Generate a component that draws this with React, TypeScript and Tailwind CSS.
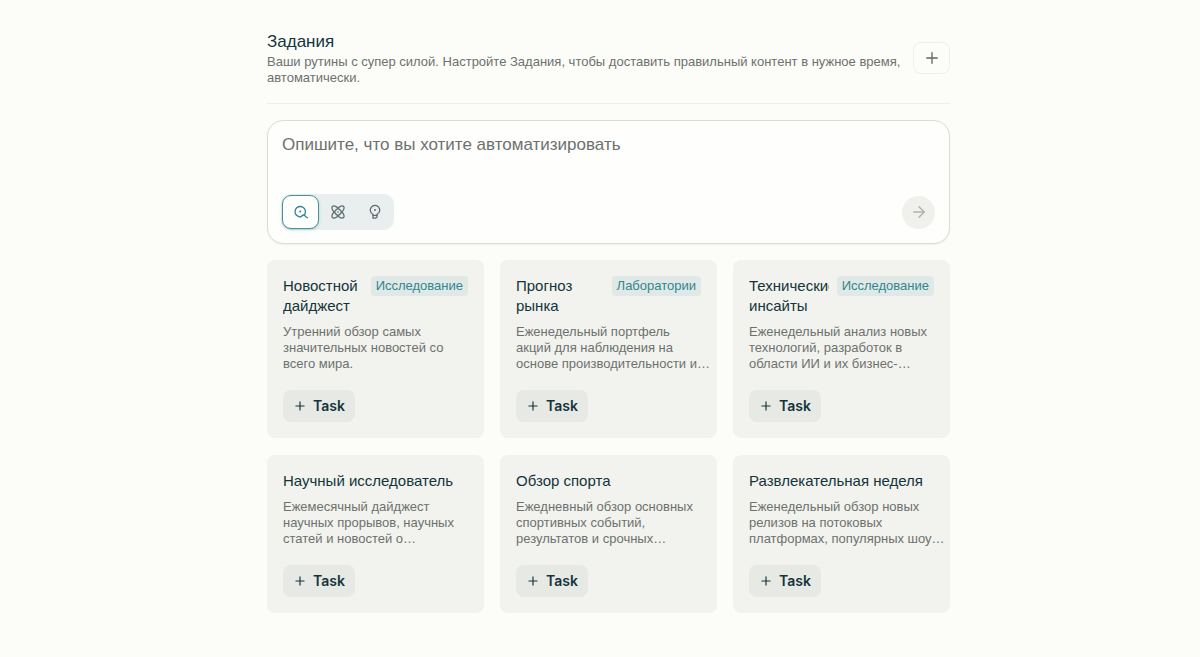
import { useState } from 'react'
import type { ReactNode } from 'react'
import { ArrowRight, Plus } from 'lucide-react'

type Mode = 'search' | 'research' | 'labs'

type Template = {
  title: string
  text: string
  badge?: string
}

const templates: Template[] = [
  { title: 'Новостной дайджест', text: 'Утренний обзор самых\nзначительных новостей со\nвсего мира.', badge: 'Исследование' },
  { title: 'Прогноз рынка', text: 'Еженедельный портфель\nакций для наблюдения на\nоснове производительности и…', badge: 'Лаборатории' },
  { title: 'Технические инсайты', text: 'Еженедельный анализ новых\nтехнологий, разработок в\nобласти ИИ и их бизнес-…', badge: 'Исследование' },
  { title: 'Научный исследователь', text: 'Ежемесячный дайджест\nнаучных прорывов, научных\nстатей и новостей о…' },
  { title: 'Обзор спорта', text: 'Ежедневный обзор основных\nспортивных событий,\nрезультатов и срочных…' },
  { title: 'Развлекательная неделя', text: 'Еженедельный обзор новых\nрелизов на потоковых\nплатформах, популярных шоу…' },
]

function ModeIcon({ children }: { children: ReactNode }) {
  return (
    <svg className="size-4" viewBox="0 0 16 16" fill="none" stroke="currentColor" strokeWidth="1.3" strokeLinecap="round" strokeLinejoin="round" aria-hidden="true">
      {children}
    </svg>
  )
}

const modes: { id: Mode; label: string; icon: ReactNode }[] = [
  {
    id: 'search',
    label: 'Поиск',
    icon: (
      <ModeIcon>
        <path d="M7.3 12.9A5.2 5.2 0 1 1 12.4 8.4c-.1 1-.5 1.7-1.1 2.4" />
        <path d="M7.3 12.9c1.4 0 1.7-1.9 3.2-1.9 1.6 0 1.9 2.4 4 2.7" />
        <circle cx="7.2" cy="7.6" r="1" fill="currentColor" stroke="none" />
      </ModeIcon>
    ),
  },
  {
    id: 'research',
    label: 'Исследование',
    icon: (
      <ModeIcon>
        <path d="M8 4.2C9.900 2 12.600 1.500 13.600 2.400s.4 3.700-1.800 5.600c2.200 1.900 2.800 4.700 1.800 5.600s-3.700.4-5.600-1.800c-1.900 2.200-4.600 2.700-5.600 1.800s-.4-3.700 1.800-5.600C2 6.100 1.400 3.300 2.400 2.400S6.100 2 8 4.200z" />
        <path d="M8 4.200c1.400 1 2.800 2.400 3.800 3.800-1 1.400-2.400 2.800-3.800 3.800C6.600 10.800 5.200 9.400 4.200 8 5.200 6.600 6.600 5.200 8 4.200z" />
        <circle cx="8" cy="8" r="0.8" fill="currentColor" stroke="none" />
      </ModeIcon>
    ),
  },
  {
    id: 'labs',
    label: 'Лаборатории',
    icon: (
      <ModeIcon>
        <path d="M6 11.4v-1.1a4.700 4.700 0 1 1 4 0v1.100z" />
        <path d="M6 11.400v2.800h2.400l1.600-1v-1.800" />
        <circle cx="8" cy="6.100" r="1" fill="currentColor" stroke="none" />
      </ModeIcon>
    ),
  },
]

function ModeSwitch() {
  const [mode, setMode] = useState<Mode>('search')

  return (
    <div role="radiogroup" aria-label="Режим" className="flex rounded-[10px] bg-[#e8efee] p-px">
      {modes.map(m => (
        <label
          key={m.id}
          className={`relative flex h-[34px] w-[37px] cursor-pointer items-center justify-center rounded-[9px] border ${mode === m.id ? 'border-[#4b929b] bg-[#fefefc] text-[#318691] shadow-sm shadow-[#4b929b]/30' : 'border-transparent text-[#5f6f70]'}`}
        >
          <input
            type="radio"
            name="mode"
            value={m.id}
            checked={mode === m.id}
            onChange={() => setMode(m.id)}
            aria-label={m.label}
            className="sr-only"
          />
          {m.icon}
        </label>
      ))}
    </div>
  )
}

function TemplateCard({ title, text, badge }: Template) {
  return (
    <article className="flex flex-col items-start rounded-lg bg-[#f2f3ee] p-4">
      <div className="flex w-full items-start justify-between gap-2">
        <h2 className="min-w-0 overflow-hidden text-[15px] leading-5 text-[#13343b]">{title}</h2>
        {badge && (
          <span className="shrink-0 rounded bg-[#e0e9e6] px-[5px] text-[13px] leading-5 text-[#318691]">{badge}</span>
        )}
      </div>
      <p className="mt-2 whitespace-pre text-[13px] leading-4 text-[#6d716e]">{text}</p>
      <button type="button" className="mt-[18px] flex h-8 items-center gap-1.5 rounded-lg bg-[#e7e9e4] px-2.5 font-[Inter,sans-serif] text-sm font-semibold text-[#13343b]">
        <Plus className="size-[14px]" strokeWidth={2} />
        Task
      </button>
    </article>
  )
}

export default function App() {
  const [prompt, setPrompt] = useState('')

  return (
    <div className="min-h-screen bg-[#fcfdf9] pl-[17px] font-['Liberation_Sans',Arial,sans-serif]">
      <main className="mx-auto max-w-[683px] pt-8 pb-11">
        <header className="flex items-start justify-between border-b border-[#eff0ec] pb-[17px]">
          <div className="max-w-[640px]">
            <h1 className="text-[17px] leading-5 text-[#13343b]">Задания</h1>
            <p className="mt-0.5 text-[13px] leading-4 text-[#6d716e]">
              Ваши рутины с супер силой. Настройте Задания, чтобы доставить правильный контент в нужное время, автоматически.
            </p>
          </div>
          <button type="button" aria-label="Создать задание" className="mt-2.5 flex h-8 w-[37px] shrink-0 items-center justify-center rounded-lg border border-[#eff0ec] text-[#5f6462]">
            <Plus className="size-[18px]" strokeWidth={1.75} />
          </button>
        </header>

        <form onSubmit={e => e.preventDefault()} className="mt-4 rounded-2xl border border-[#d9dcd7] bg-[#fefefc] pt-3.5 pr-3.5 pb-[13px] pl-[13px] shadow-xs">
          <textarea
            rows={2}
            value={prompt}
            onChange={e => setPrompt(e.target.value)}
            aria-label="Описание задания"
            placeholder="Опишите, что вы хотите автоматизировать"
            className="block h-[59px] w-full resize-none pl-px text-[17px] leading-5 outline-none placeholder:text-[#6d716e]"
          />
          <div className="flex items-center justify-between">
            <ModeSwitch />
            <button type="submit" aria-label="Отправить" className="flex size-[33px] items-center justify-center rounded-full bg-[#f0f0ed] text-[#b0b3b0]">
              <ArrowRight className="size-[18px]" />
            </button>
          </div>
        </form>

        <section className="mt-4 grid grid-cols-3 items-start gap-x-4 gap-y-[17px]">
          {templates.map(t => (
            <TemplateCard key={t.title} {...t} />
          ))}
        </section>
      </main>
    </div>
  )
}
